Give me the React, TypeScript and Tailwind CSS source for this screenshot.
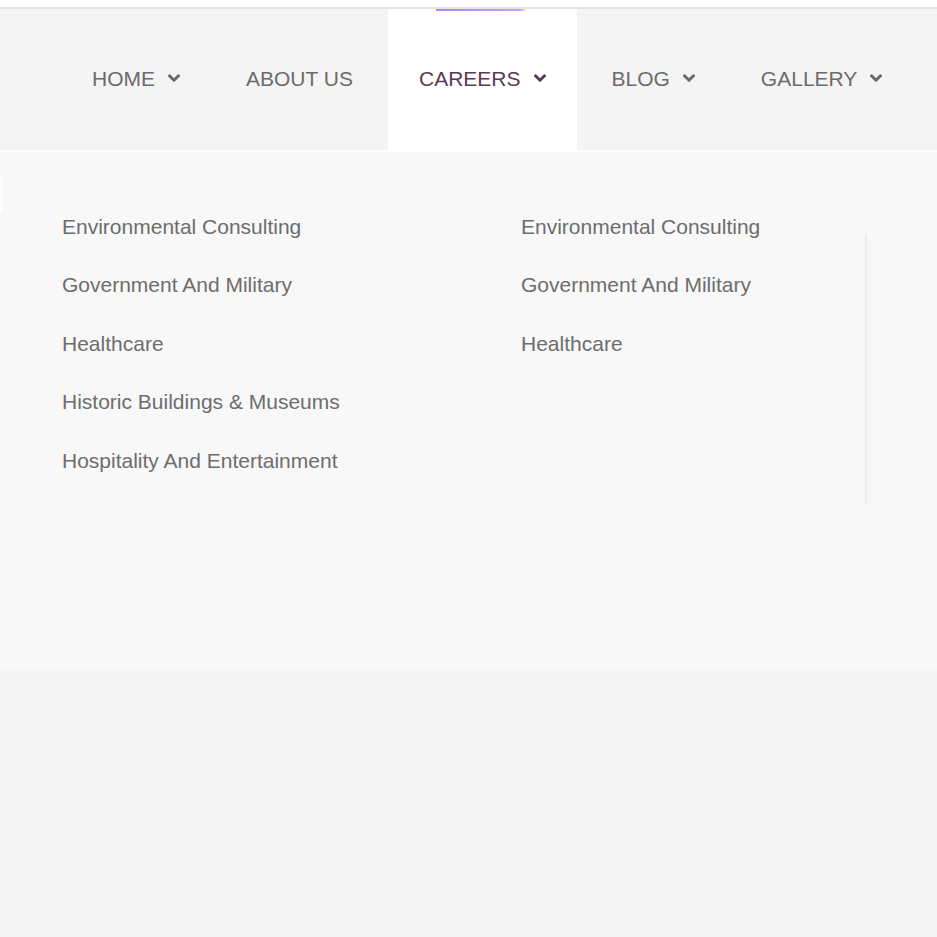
const navItems = [
  { label: "HOME", caret: true },
  { label: "ABOUT US", caret: false },
  { label: "CAREERS", caret: true, active: true },
  { label: "BLOG", caret: true },
  { label: "GALLERY", caret: true },
];

const leftLinks = [
  "Environmental Consulting",
  "Government And Military",
  "Healthcare",
  "Historic Buildings & Museums",
  "Hospitality And Entertainment",
];

const rightLinks = ["Environmental Consulting", "Government And Military", "Healthcare"];

const Caret = () => (
  <svg viewBox="0 0 12 9" className="ml-[13px] w-[12px] h-[9px]" fill="none">
    <polyline points="1.5,1.8 6,6.3 10.5,1.8" stroke="currentColor" strokeWidth="3" strokeLinecap="round" strokeLinejoin="round" />
  </svg>
);

const App = () => {
  return (
    <div className="min-h-[937px] bg-[#f5f5f5] font-['Liberation_Sans',Arial,sans-serif]">
      <div className="h-[7px] bg-white" />
      <div className="h-[2px] bg-[#e4e4e4]" />
      <nav className="flex h-[141px] bg-[#f4f4f4] pl-[61px] gap-[4px]">
        {navItems.map((item) => (
          <div
            key={item.label}
            className={`relative flex items-center px-[31px] pb-[2px] ${item.active ? "bg-white text-[#5b3a55]" : "text-[#6b6b6b]"}`}
          >
            {item.active && (
              <div className="absolute top-0 left-[48px] h-[2px] w-[89px] bg-[linear-gradient(to_right,#a68bf1,#c9a0ef_95%,#ece4fb)]" />
            )}
            <span className="text-[21px] leading-none">{item.label}</span>
            {item.caret && <Caret />}
          </div>
        ))}
      </nav>
      <div className="h-[2px] bg-white" />
      <div className="relative h-[518px] bg-[#f8f8f8] pt-[45px] pl-[62px]">
        <div className="absolute left-0 top-[24px] h-[36px] w-[3px] bg-white" />
        <div className="flex">
          <div className="w-[459px]">
            {leftLinks.map((l) => (
              <div key={l} className="flex h-[58.5px] items-center text-[21px] text-[#6d6d6d]">
                {l}
              </div>
            ))}
          </div>
          <div className="w-[344px]">
            {rightLinks.map((l) => (
              <div key={l + "r"} className="flex h-[58.5px] items-center text-[21px] text-[#6d6d6d]">
                {l}
              </div>
            ))}
          </div>
          <div className="mt-[37px] h-[270px] w-[2px] bg-[#ececec]" />
        </div>
      </div>
    </div>
  );
};

export default App;
